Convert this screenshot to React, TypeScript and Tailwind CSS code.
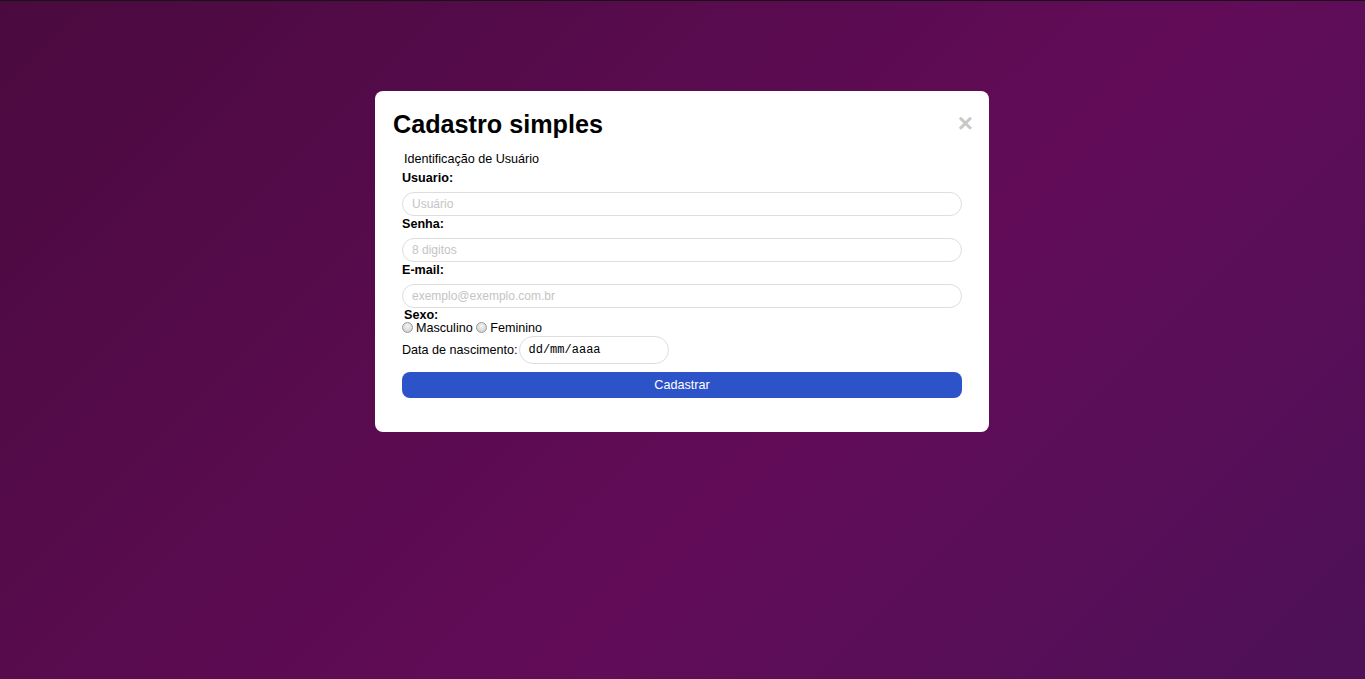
import React from "react";

function Radio() {
  return (
    <span className="inline-block w-[11px] h-[11px] rounded-full border border-[#9a9a9a] bg-[radial-gradient(circle_at_50%_35%,#f4f4f4,#c9c9c9)] align-[-1px] mr-[3px]" />
  );
}

function Field({ label, placeholder }: { label: string; placeholder: string }) {
  return (
    <div className="flex flex-col">
      <label className="text-[12.6px] leading-[16px] font-bold text-black">{label}</label>
      <div className="mt-[6px] h-[24px] rounded-full border border-[#dddddd] flex items-center pl-[9px] text-[12px] text-[#c4c4c4]">
        {placeholder}
      </div>
    </div>
  );
}

export default function App() {
  return (
    <div
      className="w-full h-[679px] border-t border-[#151515] bg-[linear-gradient(135deg,#4a0a3f_0%,#620c58_60%,#4d1157_100%)] pt-[90px] pr-[1px]"
      style={{ fontFamily: '"Liberation Sans", Arial, sans-serif' }}
    >
      <div className="mx-auto w-[614px] h-[341px] bg-white rounded-[8px] pt-[19px] pl-[18px] pr-[18px] flex flex-col">
        <div className="flex items-start justify-between">
          <h1 className="text-[25.2px] leading-[29px] font-bold text-black">Cadastro simples</h1>
          <span className="text-[26px] leading-[26px] font-bold text-[#c8c8c8] -mr-[2px]">×</span>
        </div>
        <div className="pl-[9px] pr-[9px] flex flex-col">
          <div className="mt-[13px] pl-[2px] text-[12.6px] leading-[15px] text-black">Identificação de Usuário</div>
          <div className="mt-[3px] flex flex-col">
            <Field label="Usuario:" placeholder="Usuário" />
            <Field label="Senha:" placeholder="8 digitos" />
            <Field label="E-mail:" placeholder="exemplo@exemplo.com.br" />
          </div>
          <div className="pl-[2px] text-[12.6px] leading-[14px] font-bold text-black">Sexo:</div>
          <div className="text-[12.6px] leading-[14px] text-black -mt-[1px]">
            <Radio />Masculino <Radio />Feminino
          </div>
          <div className="flex items-center mt-[1px] text-[12.6px] text-black">
            <span>Data de nascimento:</span>
            <div className="ml-[1px] w-[150px] h-[28px] rounded-full border border-[#dddddd] flex items-center pl-[9px] text-[12px] text-black" style={{ fontFamily: '"Liberation Mono", "DejaVu Sans Mono", monospace' }}>
              dd/mm/aaaa
            </div>
          </div>
          <button className="mt-[8px] h-[26px] w-full rounded-[8px] bg-[#2d53c8] text-white text-[12.6px]">Cadastrar</button>
        </div>
      </div>
    </div>
  );
}
